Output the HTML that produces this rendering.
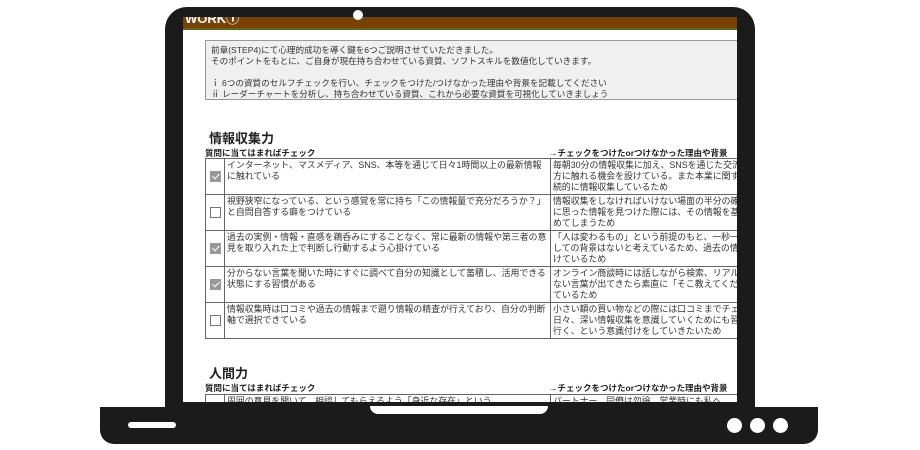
<!DOCTYPE html>
<html><head><meta charset="utf-8"><style>
*{margin:0;padding:0;box-sizing:border-box}
body{width:920px;height:450px;background:#fff;position:relative;overflow:hidden;font-family:"Liberation Sans","Noto Sans CJK JP",sans-serif;color:#333}
.lid{position:absolute;left:165px;top:7px;width:590px;height:402px;background:#1b1b1b;border-radius:22px 22px 0 0}
.screen{position:absolute;left:183px;top:17px;width:554px;height:385px;background:#fff;overflow:hidden}
.bar{position:absolute;left:0;top:0;width:100%;height:13px;background:#7a4105;border-bottom:2px solid #4e6b2a;overflow:hidden}
.bar span{position:absolute;left:2px;top:-9px;color:#fff;font-weight:bold;font-size:13px}
.cam{position:absolute;left:353px;top:10px;width:10px;height:10px;border-radius:50%;background:#fff}
.intro{position:absolute;left:22px;top:23px;width:540px;height:60px;background:#f0f0f0;border:1px solid #999;font-size:8.6px;line-height:11px;padding:4px 5px;color:#333;white-space:nowrap}
h2{position:absolute;left:26px;font-size:13px;font-weight:bold;color:#222}
.sub{position:absolute;font-size:8.5px;font-weight:bold;color:#222;white-space:nowrap}
table{position:absolute;left:22px;border-collapse:collapse;font-size:8.9px;line-height:11px;color:#333;table-layout:fixed;width:560px}
td{border:1px solid #666;vertical-align:top;padding:1px 2px;height:35px;white-space:nowrap;overflow:hidden}
td.c{width:19px;vertical-align:middle;text-align:center;padding:0}
td.q{width:326px}
td.a{width:215px}
.cb{display:inline-block;width:11px;height:11px;border:1px solid #777;background:#fff;vertical-align:middle}
.cb.on{background:#999;border-color:#999;position:relative}
.cb.on:after{content:"";position:absolute;left:3px;top:0px;width:3px;height:6px;border:solid #fff;border-width:0 1.5px 1.5px 0;transform:rotate(45deg)}
.base{position:absolute;left:100px;top:407px;width:718px;height:37px;background:#1b1b1b;border-radius:0 0 14px 14px}
.notch{position:absolute;left:370px;top:406px;width:178px;height:8px;background:#fff;border-radius:0 0 8px 8px}
.slot{position:absolute;left:128px;top:422px;width:48px;height:6px;background:#fff;border-radius:3px}
.dot{position:absolute;top:418px;width:15px;height:15px;border-radius:50%;background:#fff}
</style></head><body>
<div class="lid"></div>
<div class="screen">
<div class="bar"><span>WORK①</span></div>
<div class="intro">前章(STEP4)にて心理的成功を導く鍵を6つご説明させていただきました。<br>そのポイントをもとに、ご自身が現在持ち合わせている資質、ソフトスキルを数値化していきます。<br><br>ⅰ 6つの資質のセルフチェックを行い、チェックをつけた/つけなかった理由や背景を記載してください<br>ⅱ レーダーチャートを分析し、持ち合わせている資質、これから必要な資質を可視化していきましょう</div>
<h2 style="top:111px">情報収集力</h2>
<div class="sub" style="left:22px;top:130px">質問に当てはまればチェック</div>
<div class="sub" style="left:366px;top:130px">→チェックをつけたorつけなかった理由や背景</div>
<table style="top:141px">
<colgroup><col style="width:19px"><col style="width:326px"><col style="width:215px"></colgroup>
<tr><td class="c"><span class="cb on"></span></td><td class="q">インターネット、マスメディア、SNS、本等を通じて日々1時間以上の最新情報<br>に触れている</td><td class="a">毎朝30分の情報収集に加え、SNSを通じた交流<br>方に触れる機会を設けている。また本業に関す<br>続的に情報収集しているため</td></tr>
<tr><td class="c"><span class="cb"></span></td><td class="q">視野狭窄になっている、という感覚を常に持ち「この情報量で充分だろうか？」<br>と自問自答する癖をつけている</td><td class="a">情報収集をしなければいけない場面の半分の確<br>に思った情報を見つけた際には、その情報を基<br>めてしまうため</td></tr>
<tr><td class="c"><span class="cb on"></span></td><td class="q">過去の実例・情報・直感を鵜呑みにすることなく、常に最新の情報や第三者の意<br>見を取り入れた上で判断し行動するよう心掛けている</td><td class="a">「人は変わるもの」という前提のもと、一秒一<br>しての背景はないと考えているため、過去の情<br>けているため</td></tr>
<tr><td class="c"><span class="cb on"></span></td><td class="q">分からない言葉を聞いた時にすぐに調べて自分の知識として蓄積し、活用できる<br>状態にする習慣がある</td><td class="a">オンライン商談時には話しながら検索、リアル<br>ない言葉が出てきたら素直に「そこ教えてくだ<br>ているため</td></tr>
<tr><td class="c"><span class="cb"></span></td><td class="q">情報収集時は口コミや過去の情報まで遡り情報の精査が行えており、自分の判断<br>軸で選択できている</td><td class="a">小さい額の買い物などの際には口コミまでチェ<br>日々、深い情報収集を意識していくためにも習<br>行く、という意識付けをしていきたいため</td></tr>
</table>
<h2 style="top:346px">人間力</h2>
<div class="sub" style="left:22px;top:365px">質問に当てはまればチェック</div>
<div class="sub" style="left:366px;top:365px">→チェックをつけたorつけなかった理由や背景</div>
<table style="top:377px">
<colgroup><col style="width:19px"><col style="width:326px"><col style="width:215px"></colgroup>
<tr><td class="c"></td><td class="q">周囲の意見を聞いて、相談してもらえるよう「身近な存在」という</td><td class="a">パートナー、同僚は勿論、営業時にも私へ</td></tr>
</table>
</div>
<div class="cam"></div>
<div class="base"></div>
<div class="notch"></div>
<div class="slot"></div>
<div class="dot" style="left:727px"></div>
<div class="dot" style="left:750px"></div>
<div class="dot" style="left:773px"></div>
</body></html>
